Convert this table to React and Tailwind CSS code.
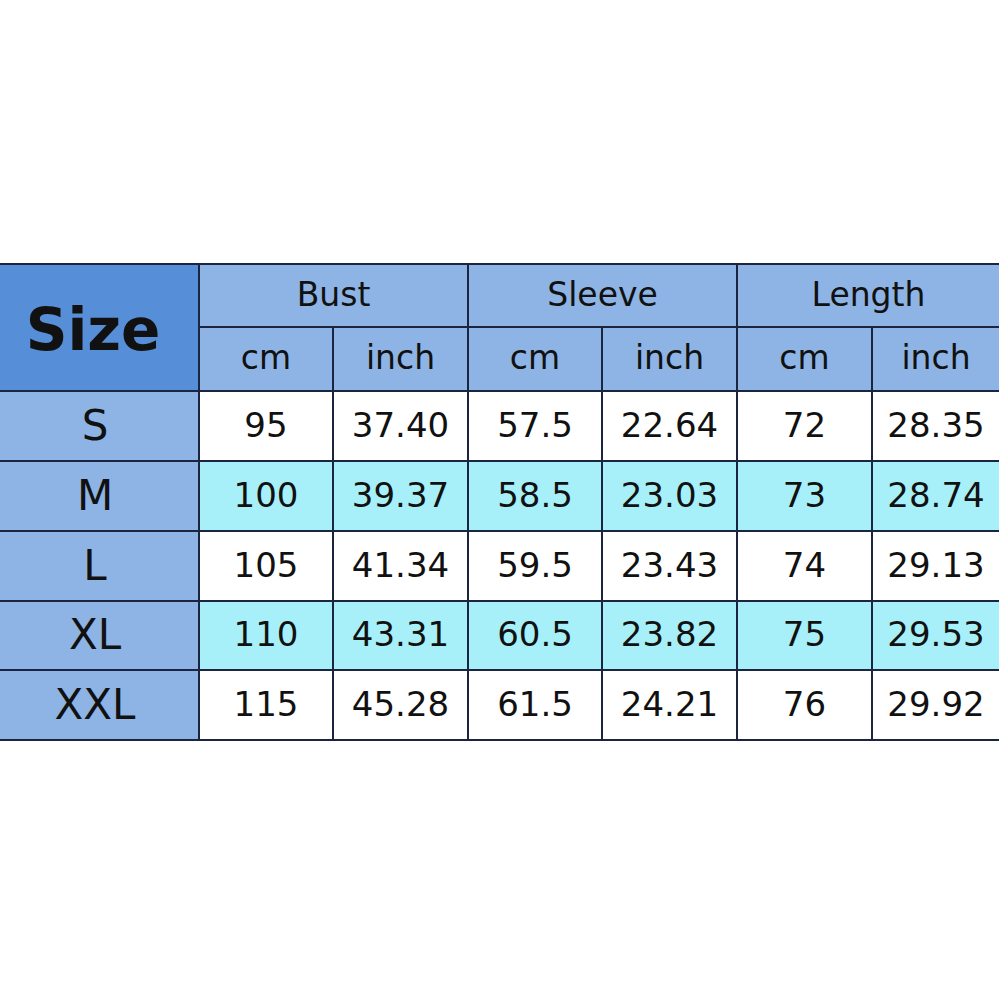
export default function App() {
  const rows = [
    ["S", "95", "37.40", "57.5", "22.64", "72", "28.35"],
    ["M", "100", "39.37", "58.5", "23.03", "73", "28.74"],
    ["L", "105", "41.34", "59.5", "23.43", "74", "29.13"],
    ["XL", "110", "43.31", "60.5", "23.82", "75", "29.53"],
    ["XXL", "115", "45.28", "61.5", "24.21", "76", "29.92"],
  ];
  const font = { fontFamily: '"DejaVu Sans", "Liberation Sans", sans-serif' };
  return (
    <div className="w-[1000px] h-[1000px] bg-white pt-[263px]" style={font}>
      <div className="w-[999px] grid grid-cols-[198px_132px_133px_132px_133px_133px_1fr] grid-rows-[61px_62px_68px_68px_68px_67px_68px] gap-[2px] bg-[#1b2540] border-y-2 border-[#1b2540] text-[#111111]">
        <div className="row-span-2 bg-[#568fd8] flex items-center justify-center text-[58px] font-bold pt-[6px] pr-[12px]">Size</div>
        <div className="col-span-2 bg-[#8db4e4] flex items-center justify-center text-[33px] pb-[2px]">Bust</div>
        <div className="col-span-2 bg-[#8db4e4] flex items-center justify-center text-[33px] pb-[2px]">Sleeve</div>
        <div className="col-span-2 bg-[#8db4e4] flex items-center justify-center text-[33px] pb-[2px]">Length</div>
        {["cm", "inch", "cm", "inch", "cm", "inch"].map((t, i) => (
          <div key={i} className="bg-[#8db4e4] flex items-center justify-center text-[33px] pb-[2px]">{t}</div>
        ))}
        {rows.map((r, ri) => (
          r.map((c, ci) => (
            <div
              key={ri + "-" + ci}
              className={
                "flex items-center justify-center pb-[2px] " +
                (ci === 0
                  ? "bg-[#8db4e4] text-[42px] pr-[8px]"
                  : (ri % 2 === 1 ? "bg-[#a7f0f9] text-[34px]" : "bg-white text-[34px]"))
              }
            >
              {c}
            </div>
          ))
        ))}
      </div>
    </div>
  );
}
